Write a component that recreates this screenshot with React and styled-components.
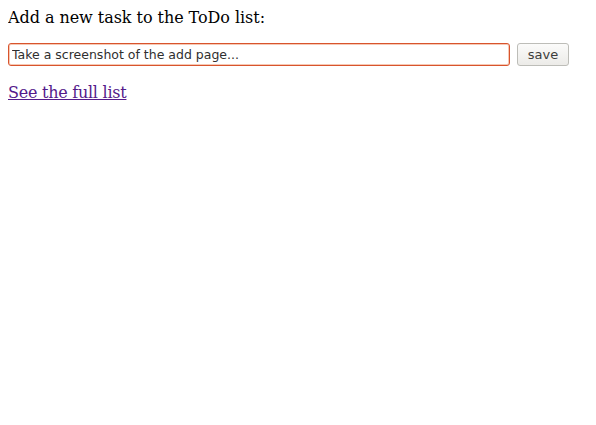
import React from 'react'
import styled, { createGlobalStyle } from 'styled-components'

const GlobalStyle = createGlobalStyle`
  body {
    margin: 8px;
    background: #fff;
    font-family: "DejaVu Serif", serif;
    font-size: 16px;
    color: #000;
  }
`

const Page = styled.div`
  display: flex;
  flex-direction: column;
`

const Title = styled.div`
  line-height: 19px;
  letter-spacing: -0.05px;
`

const Form = styled.form`
  display: flex;
  align-items: center;
  gap: 7px;
  margin: 16px 0 17px;
`

const TaskInput = styled.input`
  box-sizing: border-box;
  width: 502px;
  height: 23px;
  margin: 0;
  padding: 0 3px;
  border: 1px solid #d8542d;
  border-radius: 3px;
  box-shadow: inset 0 0 0 1px #f6c8b4;
  outline: none;
  font-family: "DejaVu Sans", sans-serif;
  font-size: 12.5px;
  color: #2f2f2f;
  background: #fff;
`

const SaveButton = styled.button`
  box-sizing: border-box;
  width: 52px;
  height: 23px;
  margin: 0;
  padding: 0;
  border: 1px solid #bdbdb8;
  border-radius: 3px;
  background: linear-gradient(#fbfbfa, #ecebe8);
  font-family: "DejaVu Sans", sans-serif;
  font-size: 13px;
  color: #3c3c3c;
`

const Link = styled.a`
  color: #551a8b;
  text-decoration: underline;
  line-height: 19px;
  letter-spacing: -0.25px;
  align-self: flex-start;
`

export default function App() {
  return (
    <Page>
      <GlobalStyle />
      <Title>Add a new task to the ToDo list:</Title>
      <Form onSubmit={e => e.preventDefault()}>
        <TaskInput defaultValue="Take a screenshot of the add page..." />
        <SaveButton type="submit">save</SaveButton>
      </Form>
      <Link href="#">See the full list</Link>
    </Page>
  )
}
